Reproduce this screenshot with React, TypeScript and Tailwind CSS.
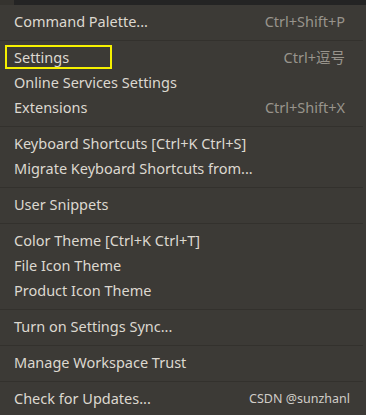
import React from 'react';

type Item = { label: string; keys?: string; boxed?: boolean; mark?: string };

const groups: Item[][] = [
  [{ label: 'Command Palette...', keys: 'Ctrl+Shift+P' }],
  [
    { label: 'Settings', keys: 'Ctrl+逗号', boxed: true },
    { label: 'Online Services Settings' },
    { label: 'Extensions', keys: 'Ctrl+Shift+X' },
  ],
  [
    { label: 'Keyboard Shortcuts [Ctrl+K Ctrl+S]' },
    { label: 'Migrate Keyboard Shortcuts from...' },
  ],
  [{ label: 'User Snippets' }],
  [
    { label: 'Color Theme [Ctrl+K Ctrl+T]' },
    { label: 'File Icon Theme' },
    { label: 'Product Icon Theme' },
  ],
  [{ label: 'Turn on Settings Sync...' }],
  [{ label: 'Manage Workspace Trust' }],
  [{ label: 'Check for Updates...', mark: 'CSDN @sunzhanl' }],
];

const Row = ({ item }: { item: Item }) => (
  <div className="relative flex h-[25px] items-center justify-between pl-[14px] pr-[21px]">
    {item.boxed && (
      <div className="absolute left-[5px] top-[-1px] h-[24px] w-[107px] border-2 border-[#f5f000]" />
    )}
    <span className="text-[14.5px] text-[#dcd8d0]">{item.label}</span>
    {item.keys && <span className="text-[14.5px] text-[#98948c]">{item.keys}</span>}
    {item.mark && <span className="mr-[-5px] text-[12.5px] text-[#d0cdc8]">{item.mark}</span>}
  </div>
);

const App = () => {
  return (
    <div
      className="h-[415px] w-[366px] overflow-hidden bg-[#3c3a36]"
      style={{ fontFamily: '"Noto Sans", "Noto Sans CJK SC", sans-serif' }}
    >
      {/* title bar behind the menu */}
      <div className="flex h-[5px]">
        <div className="w-[14px] bg-[#35332f]" />
        <div className="flex-1 bg-[#242424]" />
      </div>

      <div className="pt-[4.5px]">
        {groups.map((group, gi) => (
          <div key={gi}>
            {gi > 0 && <div className="my-[5px] mr-[3px] h-px bg-[#33312d]" />}
            {group.map(item => (
              <Row key={item.label} item={item} />
            ))}
          </div>
        ))}
      </div>
    </div>
  );
};

export default App;
